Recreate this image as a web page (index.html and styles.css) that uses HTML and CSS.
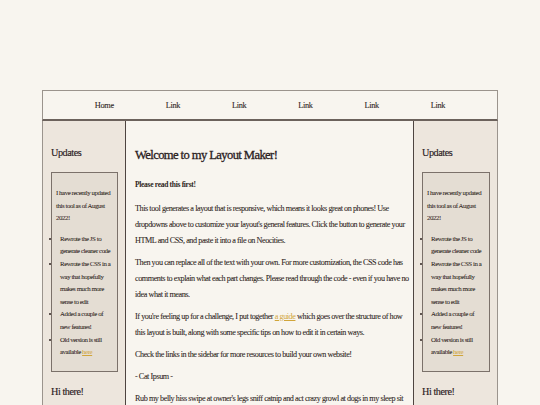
FILE: index.html
```html
<!DOCTYPE html>
<html lang="en">
<head>
<meta charset="utf-8">
<title>Layout Maker</title>
<link rel="stylesheet" href="styles.css">
</head>
<body>
<div class="container">
  <header class="header">
    <nav class="nav">
      <a class="nav-link" href="#">Home</a>
      <a class="nav-link" href="#">Link</a>
      <a class="nav-link" href="#">Link</a>
      <a class="nav-link" href="#">Link</a>
      <a class="nav-link" href="#">Link</a>
      <a class="nav-link" href="#">Link</a>
    </nav>
  </header>
  <div class="columns">
    <aside class="sidebar sidebar-left">
      <h2 class="side-title">Updates</h2>
      <div class="box">
        <p class="box-text">I have recently updated this tool as of August 2022!</p>
        <ul class="box-list">
          <li>Rewrote the JS to generate cleaner code</li>
          <li>Rewrote the CSS in a way that hopefully makes much more sense to edit</li>
          <li>Added a couple of new features!</li>
          <li>Old version is still available <a class="link" href="#">here</a></li>
        </ul>
      </div>
      <h2 class="side-title side-title-next">Hi there!</h2>
    </aside>
    <main class="main">
      <h1 class="title">Welcome to my Layout Maker!</h1>
      <p class="lead">Please read this first!</p>
      <p class="text">This tool generates a layout that is responsive, which means it looks great on phones! Use dropdowns above to customize your layout's general features. Click the button to generate your HTML and CSS, and paste it into a file on Neocities.</p>
      <p class="text">Then you can replace all of the text with your own. For more customization, the CSS code has comments to explain what each part changes. Please read through the code - even if you have no idea what it means.</p>
      <p class="text">If you're feeling up for a challenge, I put together <a class="link" href="#">a guide</a> which goes over the structure of how this layout is built, along with some specific tips on how to edit it in certain ways.</p>
      <p class="text">Check the links in the sidebar for more resources to build your own website!</p>
      <p class="text">- Cat Ipsum -</p>
      <p class="text">Rub my belly hiss swipe at owner's legs sniff catnip and act crazy growl at dogs in my sleep sit everywhere, chase the red dot and knock over the lamp.</p>
    </main>
    <aside class="sidebar sidebar-right">
      <h2 class="side-title">Updates</h2>
      <div class="box">
        <p class="box-text">I have recently updated this tool as of August 2022!</p>
        <ul class="box-list">
          <li>Rewrote the JS to generate cleaner code</li>
          <li>Rewrote the CSS in a way that hopefully makes much more sense to edit</li>
          <li>Added a couple of new features!</li>
          <li>Old version is still available <a class="link" href="#">here</a></li>
        </ul>
      </div>
      <h2 class="side-title side-title-next">Hi there!</h2>
    </aside>
  </div>
</div>
</body>
</html>
```

FILE: styles.css
```css
* {
  box-sizing: border-box;
}

html, body {
  margin: 0;
  padding: 0;
  background: #f8f5ef;
  color: #2f2522;
  font-family: "Liberation Serif", "Times New Roman", serif;
  height: 100%;
  overflow: hidden;
}

.container {
  width: 456px;
  margin: 90px auto 0;
}

.header {
  height: 31px;
  border: 1px solid #9b948d;
  border-bottom: 2px solid #6c625c;
  background: #f8f5ef;
}

.nav {
  display: flex;
  justify-content: space-evenly;
  align-items: center;
  height: 28px;
}

.nav-link {
  color: #2f2522;
  text-decoration: none;
  font-size: 8.3px;
  letter-spacing: -0.3px;
  -webkit-text-stroke: 0.1px #2f2522;
}

.columns {
  display: flex;
  align-items: stretch;
  min-height: 400px;
}

.sidebar {
  width: 84px;
  flex: 0 0 84px;
  background: #ede6dd;
  padding: 0 7px 0 8px;
}

.sidebar-left {
  border-left: 1px solid #9b948d;
  border-right: 1px solid #4e4440;
}

.sidebar-right {
  border-right: 1px solid #9b948d;
}

.main {
  flex: 1 1 auto;
  background: #f8f5ef;
  border-right: 1px solid #4e4440;
  padding: 0 2px 0 9px;
}

.side-title {
  margin: 26px 0 13px;
  font-size: 10.2px;
  line-height: 12px;
  letter-spacing: -0.45px;
  font-weight: normal;
  color: #2a201d;
  -webkit-text-stroke: 0.15px #2a201d;
}

.side-title-next {
  margin-top: 14px;
}

.box {
  background: #e4ddd3;
  border: 1px solid #7b716a;
  padding: 0 4px 12px;
  font-size: 6.9px;
  letter-spacing: -0.45px;
  line-height: 12.6px;
  -webkit-text-stroke: 0.05px #2f2522;
}

.box-text {
  margin: 14px 0 8px;
}

.box-list {
  margin: 0;
  padding-left: 4px;
}

.title {
  margin: 27px 0 15px;
  font-size: 12.6px;
  line-height: 14px;
  letter-spacing: -0.6px;
  font-weight: normal;
  color: #2a201d;
  -webkit-text-stroke: 0.3px #2a201d;
}

.lead {
  margin: 0 0 8px;
  font-size: 7.5px;
  letter-spacing: -0.3px;
  line-height: 16px;
  font-weight: bold;
}

.text {
  margin: 0 0 6px;
  font-size: 8.2px;
  letter-spacing: -0.45px;
  line-height: 16px;
  -webkit-text-stroke: 0.08px #2f2522;
}

.link {
  color: #d1a53a;
  text-decoration: underline;
  -webkit-text-stroke: 0;
}
```
